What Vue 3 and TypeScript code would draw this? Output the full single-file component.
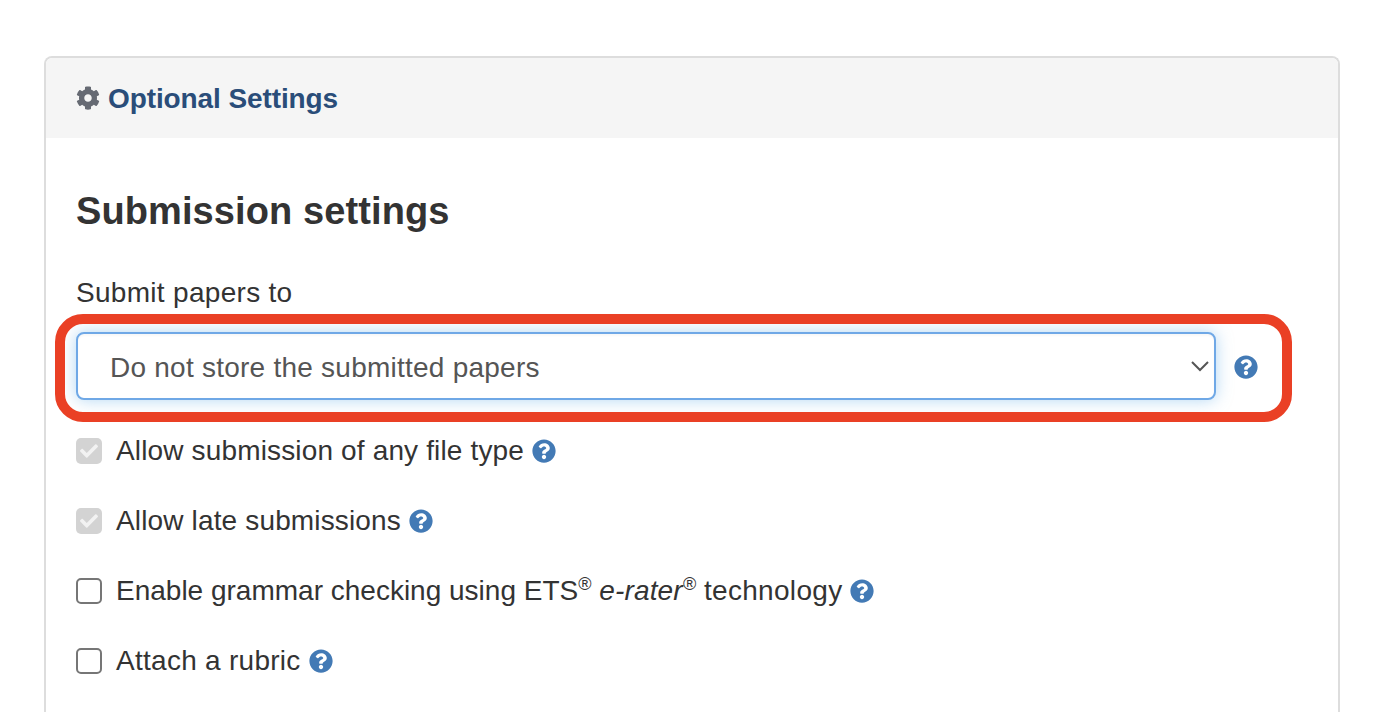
<script setup lang="ts">
const cog = 'M487.4 315.7l-42.6-24.6c4.3-23.2 4.3-47 0-70.2l42.6-24.6c4.9-2.8 7.1-8.6 5.5-14-11.1-35.6-30-67.8-54.7-94.6-3.8-4.1-10-5.1-14.8-2.3L380.8 110c-17.9-15.4-38.5-27.3-60.8-35.1V25.8c0-5.6-3.9-10.5-9.4-11.7-36.7-8.2-74.3-7.8-109.2 0-5.5 1.2-9.4 6.1-9.4 11.7V75c-22.2 7.9-42.8 19.8-60.8 35.1L88.7 85.5c-4.9-2.8-11-1.9-14.8 2.3-24.7 26.7-43.6 58.9-54.7 94.6-1.7 5.4.6 11.2 5.5 14L67.3 221c-4.3 23.2-4.3 47 0 70.2l-42.6 24.6c-4.9 2.8-7.1 8.6-5.5 14 11.1 35.6 30 67.8 54.7 94.6 3.8 4.1 10 5.1 14.8 2.3l42.6-24.6c17.9 15.4 38.5 27.3 60.8 35.1v49.2c0 5.6 3.9 10.5 9.4 11.7 36.7 8.2 74.3 7.8 109.2 0 5.5-1.2 9.4-6.1 9.4-11.7v-49.2c22.2-7.9 42.8-19.8 60.8-35.1l42.6 24.6c4.9 2.8 11 1.9 14.8-2.3 24.7-26.7 43.6-58.9 54.7-94.6 1.5-5.5-.7-11.3-5.6-14.1zM256 336c-44.1 0-80-35.9-80-80s35.9-80 80-80 80 35.9 80 80-35.9 80-80 80z'
const help = 'M504 256c0 136.997-111.043 248-248 248S8 392.997 8 256C8 119.083 119.043 8 256 8s248 111.083 248 248zM262.655 90c-54.497 0-89.255 22.957-116.549 63.758-3.536 5.286-2.353 12.415 2.715 16.258l34.699 26.31c5.205 3.947 12.621 3.008 16.665-2.122 17.864-22.658 30.113-35.797 57.303-35.797 20.429 0 45.698 13.148 45.698 32.958 0 14.976-12.363 22.667-32.534 33.976C247.128 238.528 216 254.941 216 296v4c0 6.627 5.373 12 12 12h56c6.627 0 12-5.373 12-12v-1.333c0-28.462 83.186-29.647 83.186-106.667 0-58.002-60.165-102-116.531-102zM256 338c-25.365 0-46 20.635-46 46 0 25.364 20.635 46 46 46s46-20.636 46-46c0-25.365-20.635-46-46-46z'
const check = 'M173.9 439.4L7.5 273c-10-10-10-26.2 0-36.2l36.2-36.2c10-10 26.2-10 36.2 0L192 312.7 432.1 72.6c10-10 26.2-10 36.2 0l36.2 36.2c10 10 10 26.2 0 36.2L210.1 439.4c-10 10-26.2 10-36.2 0z'
</script>

<template>
  <div class="page">
    <div class="card">
      <div class="card-head">
        <svg class="cog" viewBox="0 0 512 512"><path :d="cog" /></svg>
        <span class="card-title">Optional Settings</span>
      </div>
      <div class="card-body">
        <h2>Submission settings</h2>
        <div class="field-label">Submit papers to</div>
        <div class="select-row">
          <div class="select-box">
            <select class="select">
              <option>Do not store the submitted papers</option>
            </select>
            <svg class="chevron" viewBox="0 0 18 11"><path d="M1 1l8 8 8-8" /></svg>
          </div>
          <svg class="help row-help" viewBox="0 0 512 512"><path :d="help" /></svg>
          <div class="callout"></div>
        </div>
        <div class="check-row">
          <span class="box checked"><svg viewBox="0 0 512 512"><path :d="check" /></svg></span>
          <span class="check-text">Allow submission of any file type</span>
          <svg class="help" viewBox="0 0 512 512"><path :d="help" /></svg>
        </div>
        <div class="check-row">
          <span class="box checked"><svg viewBox="0 0 512 512"><path :d="check" /></svg></span>
          <span class="check-text">Allow late submissions</span>
          <svg class="help" viewBox="0 0 512 512"><path :d="help" /></svg>
        </div>
        <div class="check-row">
          <span class="box"></span>
          <span class="check-text plain">Enable grammar checking using ETS<sup>®</sup> <em>e-rater<sup>®</sup></em> <span class="tail">technology</span></span>
          <svg class="help" viewBox="0 0 512 512"><path :d="help" /></svg>
        </div>
        <div class="check-row">
          <span class="box"></span>
          <span class="check-text wide">Attach a rubric</span>
          <svg class="help" viewBox="0 0 512 512"><path :d="help" /></svg>
        </div>
      </div>
    </div>
  </div>
</template>

<style>
html, body {
  margin: 0;
  height: 712px;
  overflow: hidden;
  background: #fff;
}
</style>

<style scoped>
.page {
  padding: 56px 52px 0 44px;
  height: 712px;
  box-sizing: border-box;
  overflow: hidden;
  font-family: "Liberation Sans", Arial, sans-serif;
  color: #333;
  font-size: 28px;
}
.card {
  border: 2px solid #ddd;
  border-bottom: none;
  border-radius: 8px 8px 0 0;
  height: 656px;
  box-sizing: border-box;
  overflow: hidden;
}
.card-head {
  height: 80px;
  box-sizing: border-box;
  padding: 2px 30px 0;
  background: #f5f5f5;
  display: flex;
  align-items: center;
  gap: 8px;
}
.cog {
  width: 24px;
  height: 24px;
  margin-bottom: 2px;
  fill: #666a73;
}
.card-title {
  font-size: 28px;
  font-weight: 700;
  color: #2a4d79;
  letter-spacing: -0.1px;
}
.card-body {
  padding: 0 30px;
}
h2 {
  margin: 0;
  padding-top: 50px;
  height: 46px;
  line-height: 46px;
  font-size: 38px;
  font-weight: 700;
  letter-spacing: 0.1px;
}
.field-label {
  margin-top: 43px;
  height: 32px;
  line-height: 32px;
  letter-spacing: 0.3px;
}
.select-row {
  position: relative;
  margin-top: 23px;
  display: flex;
  align-items: center;
  gap: 18px;
  margin-bottom: 34px;
}
.select-box {
  position: relative;
  width: 1140px;
  height: 68px;
}
.select {
  appearance: none;
  display: block;
  width: 100%;
  height: 100%;
  box-sizing: border-box;
  border: 2px solid #6fa8e6;
  border-radius: 8px;
  background: #fff;
  padding: 2px 32px 0;
  font: 28px "Liberation Sans", Arial, sans-serif;
  letter-spacing: 0.24px;
  color: #555;
  outline: none;
  box-shadow: inset 0 2px 2px rgba(0, 0, 0, 0.03), 0 0 16px rgba(102, 175, 233, 0.5);
}
.chevron {
  position: absolute;
  right: 7px;
  top: 29px;
  width: 18px;
  height: 11px;
  fill: none;
  stroke: #555;
  stroke-width: 2;
}
.help {
  width: 24px;
  height: 24px;
  flex: none;
  fill: #437ab5;
}
.row-help {
  margin-top: 2px;
}
.callout {
  position: absolute;
  left: -21px;
  top: -18px;
  width: 1237px;
  height: 108px;
  box-sizing: border-box;
  border: 10px solid #ea4025;
  border-radius: 28px;
  pointer-events: none;
}
.check-row {
  display: flex;
  align-items: center;
  height: 34px;
  margin-bottom: 36px;
}
.box {
  width: 26px;
  height: 26px;
  box-sizing: border-box;
  border: 2px solid #767676;
  border-radius: 5px;
  background: #fff;
  display: flex;
  align-items: center;
  justify-content: center;
  margin-right: 14px;
  flex: none;
}
.box.checked {
  border: none;
  background: #d3d3d3;
}
.box svg {
  width: 18px;
  height: 18px;
  fill: #f2f2f2;
}
.check-text {
  margin-right: 8px;
  white-space: nowrap;
  letter-spacing: 0.15px;
}
.check-text.plain {
  letter-spacing: 0;
}
.check-text.wide {
  letter-spacing: 0.27px;
}
.tail {
  letter-spacing: 0.3px;
}
em {
  letter-spacing: 0.15px;
}
sup {
  font-size: 18px;
  line-height: 0;
  vertical-align: baseline;
  position: relative;
  top: -10px;
}
</style>
